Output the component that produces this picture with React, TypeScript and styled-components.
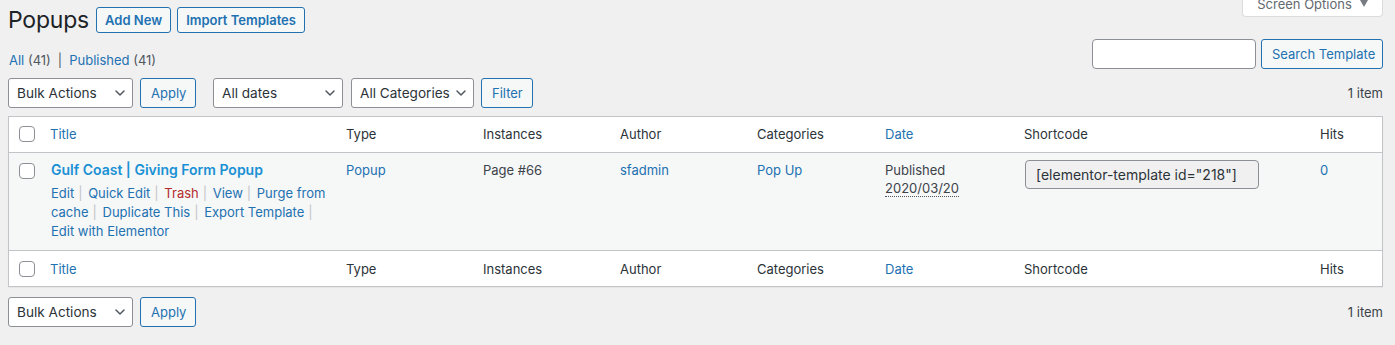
import React, { FC } from "react";
import styled, { createGlobalStyle } from "styled-components";

const GlobalStyle = createGlobalStyle`
  html, body {
    margin: 0;
    padding: 0;
    background: #f0f0f1;
  }
  body {
    font-family: Inter, "Noto Sans", "Liberation Sans", sans-serif;
    font-size: 13px;
    color: #3c434a;
    overflow: hidden;
  }
`;

const Page = styled.div`
  padding: 0 12px 0 8px;
`;

const HeadingRow = styled.div`
  display: flex;
  align-items: center;
  height: 39px;
`;

const PageTitle = styled.h1`
  margin: 0 7px 0 0;
  font-size: 23px;
  font-weight: 400;
  line-height: 30px;
  letter-spacing: -0.2px;
  color: #1d2327;
`;

const TitleAction = styled.a`
  display: inline-block;
  box-sizing: border-box;
  height: 26px;
  line-height: 24px;
  padding: 0 8px;
  margin-right: 6px;
  border: 1px solid #2271b1;
  border-radius: 3px;
  background: #f6f7f7;
  color: #2271b1;
  font-size: 13px;
  font-weight: 600;
  text-decoration: none;
`;

const ScreenTab = styled.div`
  margin-left: auto;
  align-self: flex-start;
  margin-top: -10px;
  box-sizing: border-box;
  height: 27px;
  width: 141px;
  display: flex;
  align-items: center;
  justify-content: center;
  gap: 8px;
  padding-top: 1px;
  background: #fff;
  border: 1px solid #dcdcde;
  border-top: none;
  border-radius: 0 0 4px 4px;
  color: #646970;
  font-size: 13px;
`;

const Triangle = styled.span`
  width: 0;
  height: 0;
  border-left: 4.5px solid transparent;
  border-right: 4.5px solid transparent;
  border-top: 7px solid #787c82;
`;

const FilterRow = styled.div`
  display: flex;
  justify-content: space-between;
`;

const SubSub = styled.div`
  align-self: flex-end;
  line-height: 18px;
  color: #50575e;
  font-size: 13px;
  margin-left: 1px;
`;

const Link = styled.a<{ $tone?: "danger" | "bright" }>`
  color: ${(p) => (p.$tone === "danger" ? "#b32d2e" : p.$tone === "bright" ? "#1a91d4" : "#2271b1")};
  text-decoration: none;
`;

const Sep = styled.span<{ $dark?: boolean }>`
  color: ${(p) => (p.$dark ? "#50575e" : "#c3c4c7")};
  margin: ${(p) => (p.$dark ? "0 7px" : "0 2px 0 4px")};
`;

const SearchBox = styled.div`
  display: flex;
  gap: 5px;
`;

const TextInput = styled.div`
  box-sizing: border-box;
  width: 164px;
  height: 30px;
  background: #fff;
  border: 1px solid #8c8f94;
  border-radius: 4px;
`;

const Button = styled.button<{ $w?: number; $after?: number }>`
  box-sizing: border-box;
  height: 30px;
  padding: 0 10px;
  ${(p) => (p.$w ? `width: ${p.$w}px;` : "")}
  margin-right: ${(p) => p.$after ?? 0}px;
  border: 1px solid #2271b1;
  border-radius: 3px;
  background: #f6f7f7;
  color: #2271b1;
  font-family: inherit;
  font-size: 13px;
  line-height: 28px;
  white-space: nowrap;
`;

const Tablenav = styled.div<{ $top?: number }>`
  display: flex;
  align-items: center;
  height: 30px;
  margin-top: ${(p) => p.$top ?? 0}px;
`;

const Select = styled.div<{ $w: number; $gap?: number }>`
  box-sizing: border-box;
  width: ${(p) => p.$w}px;
  height: 30px;
  margin-right: ${(p) => p.$gap ?? 7}px;
  display: flex;
  align-items: center;
  justify-content: space-between;
  padding: 0 6px 0 8px;
  background: #fff;
  border: 1px solid #8c8f94;
  border-radius: 3px;
  color: #2c3338;
  font-size: 13.6px;
  white-space: nowrap;
`;

const Count = styled.span`
  margin-left: auto;
  color: #3c434a;
  font-size: 13px;
`;

const Table = styled.table`
  width: 100%;
  margin-top: 8px;
  border-collapse: separate;
  border-spacing: 0;
  table-layout: fixed;
  background: #fff;
  border: 1px solid #c3c4c7;
  box-shadow: 0 1px 1px rgba(0, 0, 0, 0.04);
`;

const Th = styled.th<{ $foot?: boolean }>`
  text-align: left;
  font-weight: 400;
  font-size: 13px;
  line-height: 18px;
  padding: ${(p) => (p.$foot ? "9px 10px 8px" : "8px 10px 9px")};
  color: #2c3338;
  ${(p) => (p.$foot ? "border-top: 1px solid #c3c4c7;" : "border-bottom: 1px solid #c3c4c7;")}
`;

const CheckCell = styled.th<{ $foot?: boolean; $body?: boolean }>`
  padding: ${(p) => (p.$body ? "10px 0 0 10px" : p.$foot ? "9px 0 8px 10px" : "8px 0 9px 10px")};
  vertical-align: ${(p) => (p.$body ? "top" : "middle")};
  text-align: left;
  ${(p) =>
    p.$body ? "" : p.$foot ? "border-top: 1px solid #c3c4c7;" : "border-bottom: 1px solid #c3c4c7;"}
`;

const Checkbox = styled.span`
  display: block;
  box-sizing: border-box;
  width: 16px;
  height: 16px;
  background: #fff;
  border: 1px solid #8c8f94;
  border-radius: 4px;
`;

const BodyRow = styled.tr`
  background: #f6f7f7;
`;

const Td = styled.td`
  vertical-align: top;
  padding: 8px 10px 9px;
  font-size: 13px;
  line-height: 18px;
  color: #3c434a;
`;

const RowTitle = styled.strong`
  display: block;
  font-size: 14px;
  font-weight: 600;
  line-height: 18px;
  margin-left: 1px;
`;

const RowActions = styled.div`
  padding-top: 5px;
  margin-left: 1px;
  line-height: 19px;
  font-size: 13px;
`;

const DateAbbr = styled.abbr`
  text-decoration: none;
  border-bottom: 1px dotted #50575e;
`;

const Shortcode = styled.div`
  box-sizing: border-box;
  width: 234px;
  height: 29px;
  margin: -1px 0 0 1px;
  padding: 0 10px;
  display: flex;
  align-items: center;
  background: #f0f0f1;
  border: 1px solid #8c8f94;
  border-radius: 4px;
  color: #2c3338;
  font-size: 14px;
  white-space: nowrap;
`;

const Chevron: FC = () => (
  <svg width="12" height="8" viewBox="0 0 12 8" fill="none">
    <path d="M2 2l4 4 4-4" stroke="#50575e" strokeWidth="1.5" strokeLinecap="round" strokeLinejoin="round" />
  </svg>
);

const columns = [
  { label: "Title", link: true },
  { label: "Type" },
  { label: "Instances" },
  { label: "Author" },
  { label: "Categories" },
  { label: "Date", link: true },
  { label: "Shortcode" },
  { label: "Hits" },
];

const widths = [31, 296, 137, 137, 137, 128, 139, 296];

const HeadRow: FC<{ foot?: boolean }> = ({ foot }) => (
  <tr>
    <CheckCell $foot={foot}>
      <Checkbox />
    </CheckCell>
    {columns.map((c) => (
      <Th key={c.label} $foot={foot}>
        {c.link ? <Link href="#">{c.label}</Link> : c.label}
      </Th>
    ))}
  </tr>
);

const actions: { label: string; tone?: "danger" }[] = [
  { label: "Edit" },
  { label: "Quick Edit" },
  { label: "Trash", tone: "danger" },
  { label: "View" },
  { label: "Purge from cache" },
  { label: "Duplicate This" },
  { label: "Export Template" },
  { label: "Edit with Elementor" },
];

const BulkBar: FC<{ top: number; filters?: boolean }> = ({ top, filters }) => (
  <Tablenav $top={top}>
    <Select $w={125}>
      Bulk Actions <Chevron />
    </Select>
    <Button $w={56} $after={filters ? 17 : 0}>
      Apply
    </Button>
    {filters && (
      <>
        <Select $w={130} $gap={8}>
          All dates <Chevron />
        </Select>
        <Select $w={123}>
          All Categories <Chevron />
        </Select>
        <Button $w={52}>Filter</Button>
      </>
    )}
    <Count>1 item</Count>
  </Tablenav>
);

export default function App() {
  return (
    <Page>
      <GlobalStyle />
      <HeadingRow>
        <PageTitle>Popups</PageTitle>
        <TitleAction href="#">Add New</TitleAction>
        <TitleAction href="#">Import Templates</TitleAction>
        <ScreenTab>
          Screen Options <Triangle />
        </ScreenTab>
      </HeadingRow>

      <FilterRow>
        <SubSub>
          <Link href="#">All</Link> (41)
          <Sep $dark>|</Sep>
          <Link href="#">Published</Link> (41)
        </SubSub>
        <SearchBox>
          <TextInput />
          <Button $w={122}>Search Template</Button>
        </SearchBox>
      </FilterRow>

      <BulkBar top={9} filters />

      <Table>
        <colgroup>
          {widths.map((w, i) => (
            <col key={i} style={{ width: w }} />
          ))}
          <col />
        </colgroup>
        <thead>
          <HeadRow />
        </thead>
        <tbody>
          <BodyRow>
            <CheckCell as="th" $body>
              <Checkbox />
            </CheckCell>
            <Td>
              <RowTitle>
                <Link href="#" $tone="bright">
                  Gulf Coast | Giving Form Popup
                </Link>
              </RowTitle>
              <RowActions>
                {actions.map((a, i) => (
                  <React.Fragment key={a.label}>
                    <Link href="#" $tone={a.tone}>
                      {a.label}
                    </Link>
                    {i < actions.length - 1 && (
                      <>
                        <Sep>|</Sep>{" "}
                      </>
                    )}
                  </React.Fragment>
                ))}
              </RowActions>
            </Td>
            <Td>
              <Link href="#">Popup</Link>
            </Td>
            <Td>Page #66</Td>
            <Td>
              <Link href="#">sfadmin</Link>
            </Td>
            <Td>
              <Link href="#">Pop Up</Link>
            </Td>
            <Td>
              Published
              <br />
              <DateAbbr title="2020/03/20 10:00:00 am">2020/03/20</DateAbbr>
            </Td>
            <Td>
              <Shortcode>[elementor-template id="218"]</Shortcode>
            </Td>
            <Td>
              <Link href="#">0</Link>
            </Td>
          </BodyRow>
        </tbody>
        <tfoot>
          <HeadRow foot />
        </tfoot>
      </Table>

      <BulkBar top={10} />
    </Page>
  );
}
